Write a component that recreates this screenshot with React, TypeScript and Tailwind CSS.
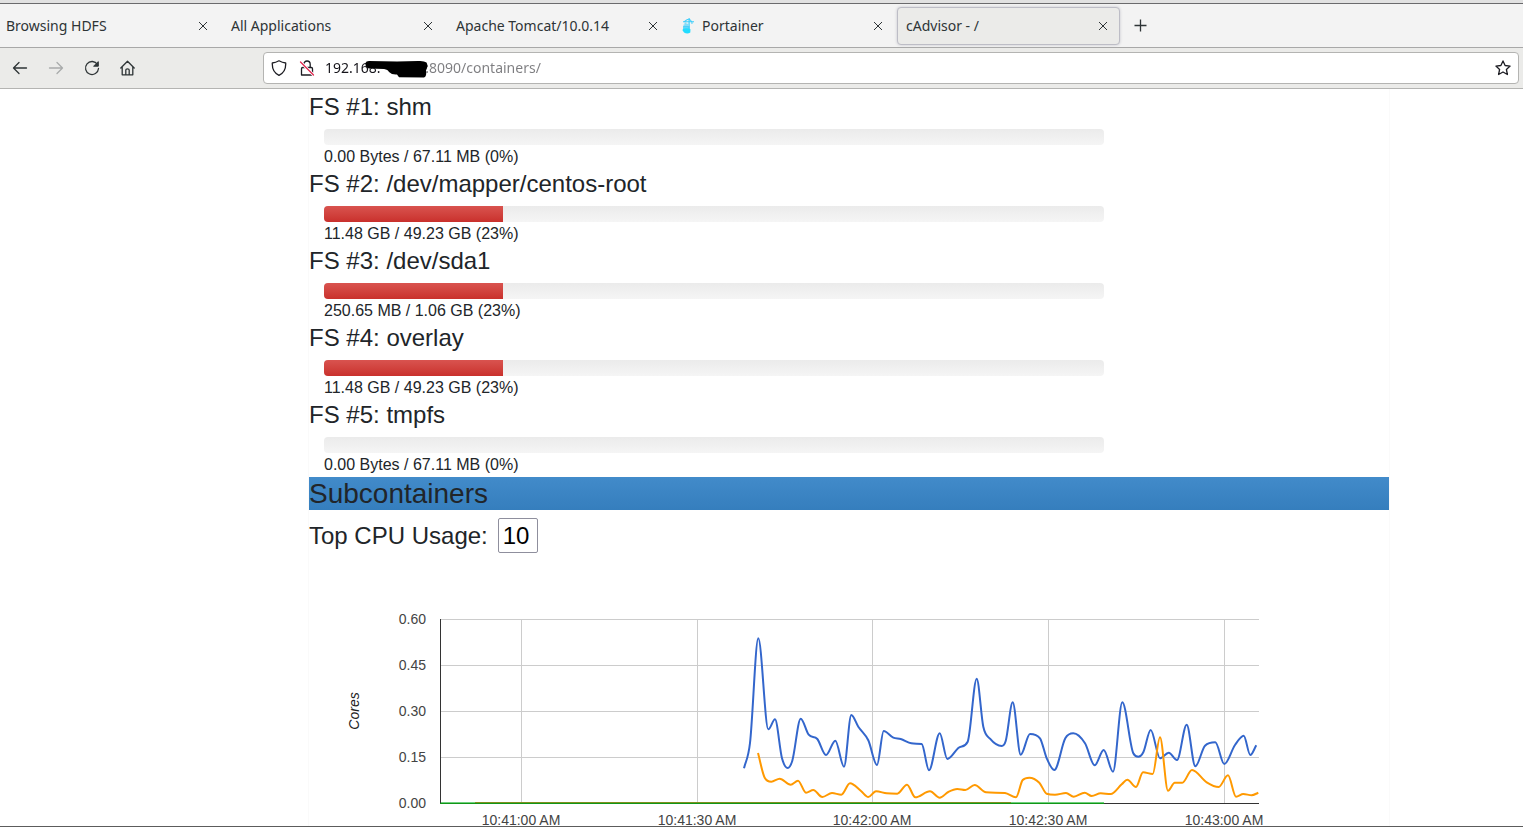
import type { ReactNode } from "react";
import clsx from "clsx";

const tabs = [
  { title: "Browsing HDFS" },
  { title: "All Applications" },
  { title: "Apache Tomcat/10.0.14" },
  { title: "Portainer", icon: <PortainerIcon /> },
  { title: "cAdvisor - /", active: true },
];

const filesystems = [
  { name: "shm", usage: "0.00 Bytes / 67.11 MB (0%)", percent: 0 },
  { name: "/dev/mapper/centos-root", usage: "11.48 GB / 49.23 GB (23%)", percent: 23 },
  { name: "/dev/sda1", usage: "250.65 MB / 1.06 GB (23%)", percent: 23 },
  { name: "overlay", usage: "11.48 GB / 49.23 GB (23%)", percent: 23 },
  { name: "tmpfs", usage: "0.00 Bytes / 67.11 MB (0%)", percent: 0 },
];

type Point = [number, number];

// [x, y] inside the plot area, y grows downwards
const blue: Point[] = [
  [304, 149.3], [310, 124], [318.3, 19.3], [328.3, 110.3], [335, 100.3], [342, 139.3],
  [347.7, 149], [352.3, 141.7], [360.7, 99.7], [368.7, 115.7], [377.3, 120], [386, 136],
  [395.3, 121.7], [404, 147.7], [411.3, 96], [418.3, 107.7], [428.3, 121.3], [437, 146],
  [443.7, 112], [453.3, 118.7], [460.7, 120], [471.3, 124.3], [481.7, 125], [489, 151.3],
  [499.7, 114.3], [507.3, 140], [518.3, 129], [527.7, 122.7], [536.7, 59.7], [543.3, 107.7],
  [550, 119.7], [561.7, 127], [565.7, 122], [572.7, 83.3], [580.7, 135.7], [590, 115],
  [600, 119.3], [606.7, 139.3], [614.3, 151], [625.3, 119.3], [633.3, 114.3], [645, 124.3],
  [654.7, 146.3], [663.7, 131], [673, 152.7], [682.3, 83.3], [693.3, 134.3], [698.3, 137.7],
  [703.3, 133.3], [710.7, 111], [720, 139.3], [728.7, 133.7], [737, 141], [746.7, 105.7],
  [755.3, 147.3], [765, 126.7], [775.3, 123.3], [784.3, 145], [795, 126], [803.7, 116.7],
  [810.3, 136], [816.3, 126.3],
];

const orange: Point[] = [
  [318, 134], [324.7, 158.7], [331.3, 162.7], [339.7, 159.7], [350.7, 165.7], [358, 161.7],
  [366, 173.7], [373.3, 171], [382.3, 178], [392, 174], [401.3, 175.7], [410, 164.3],
  [421, 172], [428.3, 178], [436, 172.3], [446.7, 174.3], [457.3, 174.7], [467, 165.7],
  [475.3, 178.3], [490, 172.3], [499.7, 178.7], [508.3, 173], [517.3, 170], [525.3, 171],
  [534.7, 166], [546, 173.3], [565, 174], [576, 178.3], [582.7, 161], [589.3, 158.7],
  [599.3, 163.7], [606.7, 174.7], [615, 175.7], [626, 174], [633.7, 177.7], [644.7, 173.7],
  [651.7, 177], [660.7, 174.3], [670.7, 175], [681.7, 165.3], [687.3, 160.7], [696, 168],
  [703, 153.3], [712.7, 155], [720, 118.3], [728, 171.7], [734.7, 163.7], [742.3, 163.7],
  [752, 151], [766.7, 163.3], [778.7, 168], [788, 156.3], [796, 177.7], [803.3, 175],
  [811.7, 176.3], [818.3, 173.7],
];

const xTicks = [
  { x: 81, label: "10:41:00 AM" },
  { x: 257, label: "10:41:30 AM" },
  { x: 432, label: "10:42:00 AM" },
  { x: 608, label: "10:42:30 AM" },
  { x: 784, label: "10:43:00 AM" },
];

const yTicks = ["0.60", "0.45", "0.30", "0.15", "0.00"];

// cubic curve through every point, flat at the local peaks
function smoothPath(points: Point[]) {
  const slope = (i: number) => (points[i + 1][1] - points[i][1]) / (points[i + 1][0] - points[i][0]);
  const tangents = points.map((_, i) => {
    if (i === 0) return slope(0);
    if (i === points.length - 1) return slope(i - 1);
    const a = slope(i - 1);
    const b = slope(i);
    if (a * b <= 0) return 0;
    return Math.sign(a) * Math.min(Math.abs(a + b) / 2, 3 * Math.abs(a), 3 * Math.abs(b));
  });
  let d = `M${points[0][0]},${points[0][1]}`;
  for (let i = 1; i < points.length; i++) {
    const [x0, y0] = points[i - 1];
    const [x1, y1] = points[i];
    const h = (x1 - x0) / 3;
    d += `C${x0 + h},${y0 + h * tangents[i - 1]} ${x1 - h},${y1 - h * tangents[i]} ${x1},${y1}`;
  }
  return d;
}

function PortainerIcon() {
  return (
    <svg width="15" height="16" viewBox="0 0 15 16" className="shrink-0" fill="#3bcdfb" aria-hidden="true">
      <path d="M2 3.2h11v1H2zM7.500 0h1.200v11H7.500zM5 1.700l3-1.700 3 3.200h-1.200L8 1.200 4.500 3.200H3zM10.500 4h.9v2h-.9z" />
      <path d="M3.500 4.500h2v1.200h1.800v3.500H2.500V6.500h1z" opacity=".6" />
      <path d="M2 8h6.500v3.500H2z" opacity=".75" />
      <path d="M1.800 11q3.800-1.400 7.700.2l-.2 3.200q-2.800 2.200-6.300.2L1.700 12.500z" fill="#22dcff" />
    </svg>
  );
}

function CloseIcon() {
  return (
    <svg width="10" height="10" viewBox="0 0 10 10" stroke="#2e3436" strokeWidth="1" aria-hidden="true">
      <path d="M1 1l8 8M9 1l-8 8" />
    </svg>
  );
}

function Icon({ children, className }: { children: ReactNode; className?: string }) {
  return (
    <svg
      width="16"
      height="16"
      viewBox="0 0 16 16"
      fill="none"
      stroke="currentColor"
      strokeWidth="1.3"
      strokeLinecap="round"
      strokeLinejoin="round"
      className={clsx("shrink-0", className)}
      aria-hidden="true"
    >
      {children}
    </svg>
  );
}

function ToolButton({ label, children, disabled }: { label: string; children: ReactNode; disabled?: boolean }) {
  return (
    <button
      type="button"
      aria-label={label}
      disabled={disabled}
      className="flex h-8 w-9 items-center justify-center text-[#2e3436] disabled:text-[#a9abab]"
    >
      {children}
    </button>
  );
}

function TabBar() {
  return (
    <div className="flex h-11 items-center border-b border-[#a8a8a8] bg-[#f3f3f3]">
      <div className="-ml-[3px] flex gap-0.5">
        {tabs.map((tab) => (
          <div
            key={tab.title}
            className={clsx(
              "flex h-[38px] w-[223px] items-center gap-1.5 rounded border pr-[11px] pl-2",
              tab.active ? "border-[#bdbdc6] bg-[#ebebe9] shadow-[0_0_3px_#c4c4cc]" : "border-transparent"
            )}
          >
            {tab.icon}
            <button type="button" className="flex-1 text-left whitespace-nowrap">
              {tab.title}
            </button>
            <button type="button" aria-label={`Close ${tab.title}`}>
              <CloseIcon />
            </button>
          </div>
        ))}
      </div>
      <button type="button" aria-label="New tab" className="ml-3.5">
        <svg width="13" height="13" viewBox="0 0 13 13" stroke="#2e3436" strokeWidth="1.3" aria-hidden="true">
          <path d="M6.500 .5v12M.5 6.500h12" />
        </svg>
      </button>
    </div>
  );
}

function Toolbar() {
  return (
    <div className="flex h-[41px] items-center border-b border-[#b4b4b2] bg-[#ebebe9] pr-1 pl-0.5">
      <div className="flex w-[261px] shrink-0">
        <ToolButton label="Back">
          <Icon>
            <path d="M14.500 8h-13M7 2.500L1.500 8 7 13.500" />
          </Icon>
        </ToolButton>
        <ToolButton label="Forward" disabled>
          <Icon>
            <path d="M1.500 8h13M9 2.500L14.500 8 9 13.500" />
          </Icon>
        </ToolButton>
        <ToolButton label="Reload">
          <Icon>
            <path d="M13.500 4.500A6.500 6.500 0 1 0 14.500 8.500" />
            <path d="M14.300 2v4.200H10z" fill="currentColor" strokeWidth="1" />
          </Icon>
        </ToolButton>
        <ToolButton label="Home">
          <Icon>
            <path d="M.8 8L7.500 1.200 14.200 8M2.200 7v7.800h10.600V7M5.800 14.500V10q0-1.200 1.700-1.200T9.200 10v4.500" />
          </Icon>
        </ToolButton>
      </div>
      <div className="relative flex h-8 flex-1 items-center rounded border border-[#b4b4b2] bg-white px-[7px]">
        <Icon className="text-[#1c1c22]">
          <path d="M8 .8q3.300 2 6.700 2.200C15 9 12 13.500 8 15.300 4 13.500 1 9 1.300 3 4.700 2.800 8 .8 8 .8z" />
        </Icon>
        <Icon className="ml-3 text-[#1c1c22]">
          <path d="M4.800 7.500V4.200a3.200 3.200 0 0 1 6.400 0v3.300M2.500 15V8.700q0-1.200 1.200-1.200h8.600q1.200 0 1.200 1.200V15z" />
          <path d="M1.500 2l13 13" stroke="#fff" strokeWidth="3" />
          <path d="M1.500 2l13 13" stroke="#e22850" />
        </Icon>
        <input
          type="text"
          aria-label="Address"
          defaultValue={"192.168.\u2007\u2007\u2007\u2007\u2007\u2009\u2009:8090/containers/"}
          className="ml-[10px] min-w-0 flex-1 bg-[linear-gradient(90deg,#15141a_101px,#7d7d80_101px)] bg-clip-text text-transparent outline-none"
        />
        {/* scribble that hides the host part of the address */}
        <svg width="66" height="20" viewBox="0 0 66 20" className="absolute top-[6px] left-[100px]" aria-hidden="true">
          <path d="M1.500 4Q1 8.500 5 9.500L20 10Q24 10.500 25 13 28 16 33 15.500L35 18.300 60 18.500Q63 17.500 62 11.500 64.500 7 62.500 3.500 60 1.500 54 2L33 2.500 5 2Q2 2.200 1.500 4z" />
        </svg>
        <button type="button" aria-label="Bookmark this page">
          <Icon className="text-[#1c1c22]">
            <path d="M8 .9l2.100 4.600 5 .6-3.700 3.400 1 5L8 12l-4.400 2.500 1-5L.9 6.100l5-.6z" />
          </Icon>
        </button>
      </div>
    </div>
  );
}

function Filesystem({ index, name, usage, percent }: { index: number; name: string; usage: string; percent: number }) {
  return (
    <section>
      <h3 className="mb-2 text-2xl leading-[29px]">
        FS #{index}: {name}
      </h3>
      <div className="w-3/4 px-[15px]">
        <div className="h-4 overflow-hidden rounded bg-linear-to-b from-[#ebebeb] to-[#f5f5f5]">
          <div className="h-full bg-linear-to-b from-[#d9534f] to-[#c9302c]" style={{ width: `${percent}%` }} />
        </div>
        <p className="text-base leading-6">{usage}</p>
      </div>
    </section>
  );
}

function CpuChart() {
  return (
    <svg viewBox="0 0 1080 273" className="w-full text-sm" role="img" aria-label="Top CPU usage in cores">
      <g transform="translate(131 66)">
        <g stroke="#ccc" shapeRendering="crispEdges">
          {yTicks.map((label, i) => (
            <line key={label} x1="0" x2="819" y1={i * 46 + 0.5} y2={i * 46 + 0.5} />
          ))}
          {xTicks.map(({ x }) => (
            <line key={x} x1={x + 0.5} x2={x + 0.5} y1="0" y2="184" />
          ))}
        </g>
        <g stroke="#333" shapeRendering="crispEdges">
          <line x1="0.5" x2="0.5" y1="0" y2="185" />
          <line x1="0" x2="819" y1="184.5" y2="184.5" />
        </g>
        <g shapeRendering="crispEdges">
          <line x1="1" x2="664" y1="183.5" y2="183.5" stroke="#6fd07c" />
          <line x1="35" x2="571" y1="183.5" y2="183.5" stroke="#7f8f1e" />
          <line x1="0" x2="664" y1="184.5" y2="184.5" stroke="#109618" />
        </g>
        <path d={smoothPath(blue)} fill="none" stroke="#3366cc" strokeWidth="2" />
        <path d={smoothPath(orange)} fill="none" stroke="#ff9900" strokeWidth="2" />
        <g fill="#444">
          {yTicks.map((label, i) => (
            <text key={label} x="-14" y={i * 46 + 5} textAnchor="end">
              {label}
            </text>
          ))}
          {xTicks.map(({ x, label }) => (
            <text key={label} x={x} y="206" textAnchor="middle">
              {label}
            </text>
          ))}
        </g>
        <text transform="translate(-81 92) rotate(-90)" textAnchor="middle" fontStyle="italic" fill="#222">
          Cores
        </text>
      </g>
    </svg>
  );
}

export default function App() {
  return (
    <div className="flex min-h-screen flex-col border-b border-[#5c5c5c] bg-white">
      <header className="border-t-[3px] border-[#e1e1e1] font-['Noto_Sans',sans-serif] text-sm text-[#2e3436]">
        <div className="border-t border-[#6a6a6c]">
          <TabBar />
          <Toolbar />
        </div>
      </header>
      <main className="flex-1 pl-[175px] font-['Liberation_Sans',Arial,sans-serif] text-[#212529]">
        <div className="mx-auto w-full max-w-[1082px] border-x border-[#fafafa] pt-[3px]">
          {filesystems.map((fs, i) => (
            <Filesystem key={fs.name} index={i + 1} {...fs} />
          ))}
          <h2 className="mb-2 bg-linear-to-b from-[#428bca] to-[#357ebd] pt-px text-[28px] leading-8">Subcontainers</h2>
          <div className="flex items-center text-2xl">
            <label htmlFor="top-cpu">Top CPU Usage:</label>
            <input
              id="top-cpu"
              type="text"
              defaultValue="10"
              className="ml-2.5 h-[35px] w-10 rounded-xs border border-[#8f8f9d] bg-white px-1 text-black"
            />
          </div>
          <CpuChart />
        </div>
      </main>
    </div>
  );
}
